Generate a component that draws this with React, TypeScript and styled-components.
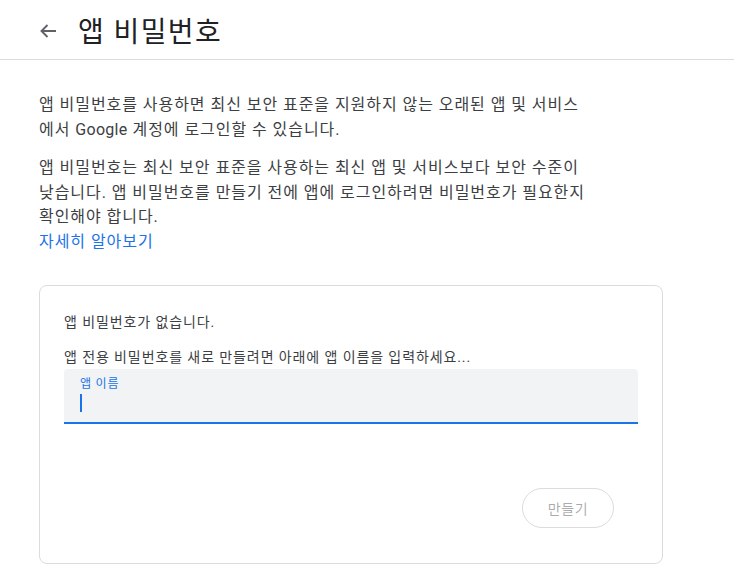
import React from 'react'
import styled, { createGlobalStyle } from 'styled-components'

const GlobalStyle = createGlobalStyle`
  html, body {
    margin: 0;
    padding: 0;
    background: #fff;
  }
  body {
    font-family: Roboto, Arial, "Noto Sans CJK KR", sans-serif;
    color: #3c4043;
  }
`

const Header = styled.header`
  display: flex;
  align-items: center;
  height: 60px;
  border-bottom: 1px solid #dadce0;
  padding-left: 36px;
  box-sizing: border-box;
`

const BackButton = styled.button`
  display: flex;
  align-items: center;
  justify-content: center;
  width: 24px;
  height: 24px;
  padding: 0;
  margin: 2px 18px 0 0;
  border: none;
  background: none;
  cursor: pointer;
`

const Title = styled.h1`
  margin: 0;
  font-size: 28px;
  font-weight: 400;
  color: #202124;
  letter-spacing: 1.4px;
`

const Main = styled.main`
  padding: 33px 0 0 39px;
`

const Text = styled.p`
  margin: 0 0 14px;
  max-width: 554px;
  font-size: 16px;
  line-height: 24.5px;
  letter-spacing: 0.95px;
  color: #3c4043;
`

const Latin = styled.span`
  letter-spacing: 0.3px;
`

const Link = styled.a`
  color: #1a73e8;
  text-decoration: none;
`

const Card = styled.section`
  width: 624px;
  box-sizing: border-box;
  margin-top: 31px;
  padding: 26px 24px 35px;
  border: 1px solid #dadce0;
  border-radius: 8px;
`

const CardText = styled.p<{ $gap: number }>`
  margin: 0 0 ${({ $gap }) => $gap}px;
  font-size: 14px;
  line-height: 20px;
  letter-spacing: 0.9px;
  color: #3c4043;
`

const Field = styled.div`
  height: 55px;
  box-sizing: border-box;
  padding: 7px 16px 0;
  background: #f1f3f4;
  border-radius: 4px 4px 0 0;
  border-bottom: 2px solid #1a73e8;
`

const FieldLabel = styled.div`
  font-size: 12px;
  line-height: 16px;
  letter-spacing: 0.8px;
  color: #1a73e8;
`

const Caret = styled.div`
  width: 1.5px;
  height: 18px;
  margin-top: 2px;
  background: #1a73e8;
`

const Actions = styled.div`
  display: flex;
  justify-content: flex-end;
  margin: 64px 24px 0 0;
`

const CreateButton = styled.button`
  width: 92px;
  height: 40px;
  border: 1px solid #dadce0;
  border-radius: 20px;
  background: #fff;
  font-family: inherit;
  font-size: 14px;
  letter-spacing: 0.6px;
  color: rgba(60, 64, 67, 0.45);
`

const BackIcon = () => (
  <svg width="24" height="24" viewBox="0 0 24 24" fill="none">
    <path
      d="M20 12H5.5M11.5 6L5.5 12l6 6"
      stroke="#5f6368"
      strokeWidth="1.9"
    />
  </svg>
)

export default function App() {
  return (
    <>
      <GlobalStyle />
      <Header>
        <BackButton aria-label="뒤로">
          <BackIcon />
        </BackButton>
        <Title>앱 비밀번호</Title>
      </Header>
      <Main>
        <Text>
          앱 비밀번호를 사용하면 최신 보안 표준을 지원하지 않는 오래된 앱 및 서비스에서 <Latin>Google</Latin> 계정에 로그인할 수 있습니다.
        </Text>
        <Text>
          앱 비밀번호는 최신 보안 표준을 사용하는 최신 앱 및 서비스보다 보안 수준이 낮습니다. 앱 비밀번호를 만들기 전에 앱에 로그인하려면 비밀번호가 필요한지 확인해야 합니다.
          <br />
          <Link href="#">자세히 알아보기</Link>
        </Text>
        <Card>
          <CardText $gap={15}>앱 비밀번호가 없습니다.</CardText>
          <CardText $gap={2}>앱 전용 비밀번호를 새로 만들려면 아래에 앱 이름을 입력하세요...</CardText>
          <Field>
            <FieldLabel>앱 이름</FieldLabel>
            <Caret />
          </Field>
          <Actions>
            <CreateButton disabled>만들기</CreateButton>
          </Actions>
        </Card>
      </Main>
    </>
  )
}
